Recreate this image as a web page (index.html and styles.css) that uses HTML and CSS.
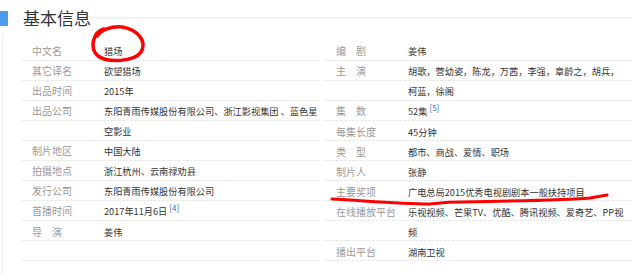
FILE: index.html
```html
<!DOCTYPE html>
<html lang="zh-CN">
<head>
<meta charset="utf-8">
<title>猎场 - 基本信息</title>
<link rel="stylesheet" href="styles.css">
</head>
<body>
<div class="page">
  <div class="title-bar">
    <span class="title-mark"></span>
    <h2 class="title">基本信息</h2>
    <span class="title-rule"></span>
  </div>
  <div class="basic-info">
    <dl class="col col-left">
      <div class="row"><dt>中文名</dt><dd>猎场</dd></div>
      <div class="row"><dt>其它译名</dt><dd>欲望猎场</dd></div>
      <div class="row"><dt>出品时间</dt><dd>2015年</dd></div>
      <div class="row"><dt>出品公司</dt><dd>东阳青雨传媒股份有限公司、浙江影视集团 、蓝色星空影业</dd></div>
      <div class="row"><dt>制片地区</dt><dd>中国大陆</dd></div>
      <div class="row"><dt>拍摄地点</dt><dd>浙江杭州、云南禄劝县</dd></div>
      <div class="row"><dt>发行公司</dt><dd>东阳青雨传媒股份有限公司</dd></div>
      <div class="row"><dt>首播时间</dt><dd>2017年11月6日 <sup class="ref">[4]</sup></dd></div>
      <div class="row"><dt>导　演</dt><dd>姜伟</dd></div>
    </dl>
    <dl class="col col-right">
      <div class="row"><dt>编　剧</dt><dd>姜伟</dd></div>
      <div class="row"><dt>主　演</dt><dd>胡歌，营幼姿，陈龙，万茜，李强，章龄之，胡兵，柯蓝，徐阁</dd></div>
      <div class="row"><dt>集　数</dt><dd>52集 <sup class="ref">[5]</sup></dd></div>
      <div class="row"><dt>每集长度</dt><dd>45分钟</dd></div>
      <div class="row"><dt>类　型</dt><dd>都市、商战、爱情、职场</dd></div>
      <div class="row"><dt>制片人</dt><dd>张静</dd></div>
      <div class="row"><dt>主要奖项</dt><dd>广电总局2015优秀电视剧剧本一般扶持项目</dd></div>
      <div class="row"><dt>在线播放平台</dt><dd>乐视视频、芒果TV、优酷、腾讯视频、爱奇艺、PP视频</dd></div>
      <div class="row"><dt>播出平台</dt><dd>湖南卫视</dd></div>
    </dl>
  </div>
  <svg class="annot" width="640" height="275" viewBox="0 0 640 275" aria-hidden="true">
    <path d="M104 29 C93 32 89 48 98 56 C108 63 134 62 141 52 C147 42 139 30 122 27 C111 26 101 30 97 36" fill="none" stroke="#f00" stroke-width="3.5" stroke-linecap="round"/>
    <path d="M332 199 C368 201 400 204 430 204 C440 203 446 202 462 202 C520 201 568 200 590 198 L607 195" fill="none" stroke="#f00" stroke-width="3" stroke-linecap="round"/>
  </svg>
</div>
</body>
</html>
```
FILE: styles.css
```css
* { box-sizing: border-box; }
html, body { margin: 0; padding: 0; background: #fff; }
body {
  font-family: "Noto Sans CJK SC", "Noto Sans", sans-serif;
  color: #333;
}
.page {
  position: relative;
  width: 640px;
  height: 275px;
  overflow: hidden;
}
.title-bar {
  display: flex;
  align-items: center;
  height: 34px;
  padding-top: 2px;
}
.title-mark {
  width: 8px;
  height: 15px;
  background: #4f9cee;
  flex: none;
}
.title {
  margin: 0 6px 0 15px;
  font-size: 17px;
  font-weight: normal;
  color: #333;
  line-height: 20px;
}
.title-rule {
  flex: none;
  width: 535px;
  height: 2px;
  background: #f3f3f3;
  margin-top: -1px;
}
.basic-info {
  display: flex;
  margin-left: 2px;
  padding-top: 7px;
  padding-left: 19px;
  border-left: 1px solid #ededed;
  gap: 4px;
  height: 241px;
  align-items: flex-start;
}
.col {
  margin: 0;
  height: 220px;
  background-image:
    repeating-linear-gradient(90deg, transparent 0 3px, #fff 3px 4px),
    repeating-linear-gradient(180deg, transparent 0 19px, #e9e9e9 19px 20px);
}
.col-left { width: 298px; }
.col-right { width: 308px; }
.row {
  display: flex;
  line-height: 20px;
}
dt {
  flex: none;
  width: 82px;
  padding-left: 10px;
  font-size: 10px;
  color: #999;
  white-space: nowrap;
}
.col-right dt { width: 84px; padding-left: 12px; }
dd {
  margin: 0;
  flex: 1;
  min-width: 0;
  font-size: 9.2px;
  color: #333;
}
.col-right dd { padding-right: 6px; }
.ref {
  font-size: 8px;
  color: #3366cc;
  vertical-align: 0;
  position: relative;
  top: -4px;
}
.annot {
  position: absolute;
  left: 0;
  top: 0;
  pointer-events: none;
}
```
